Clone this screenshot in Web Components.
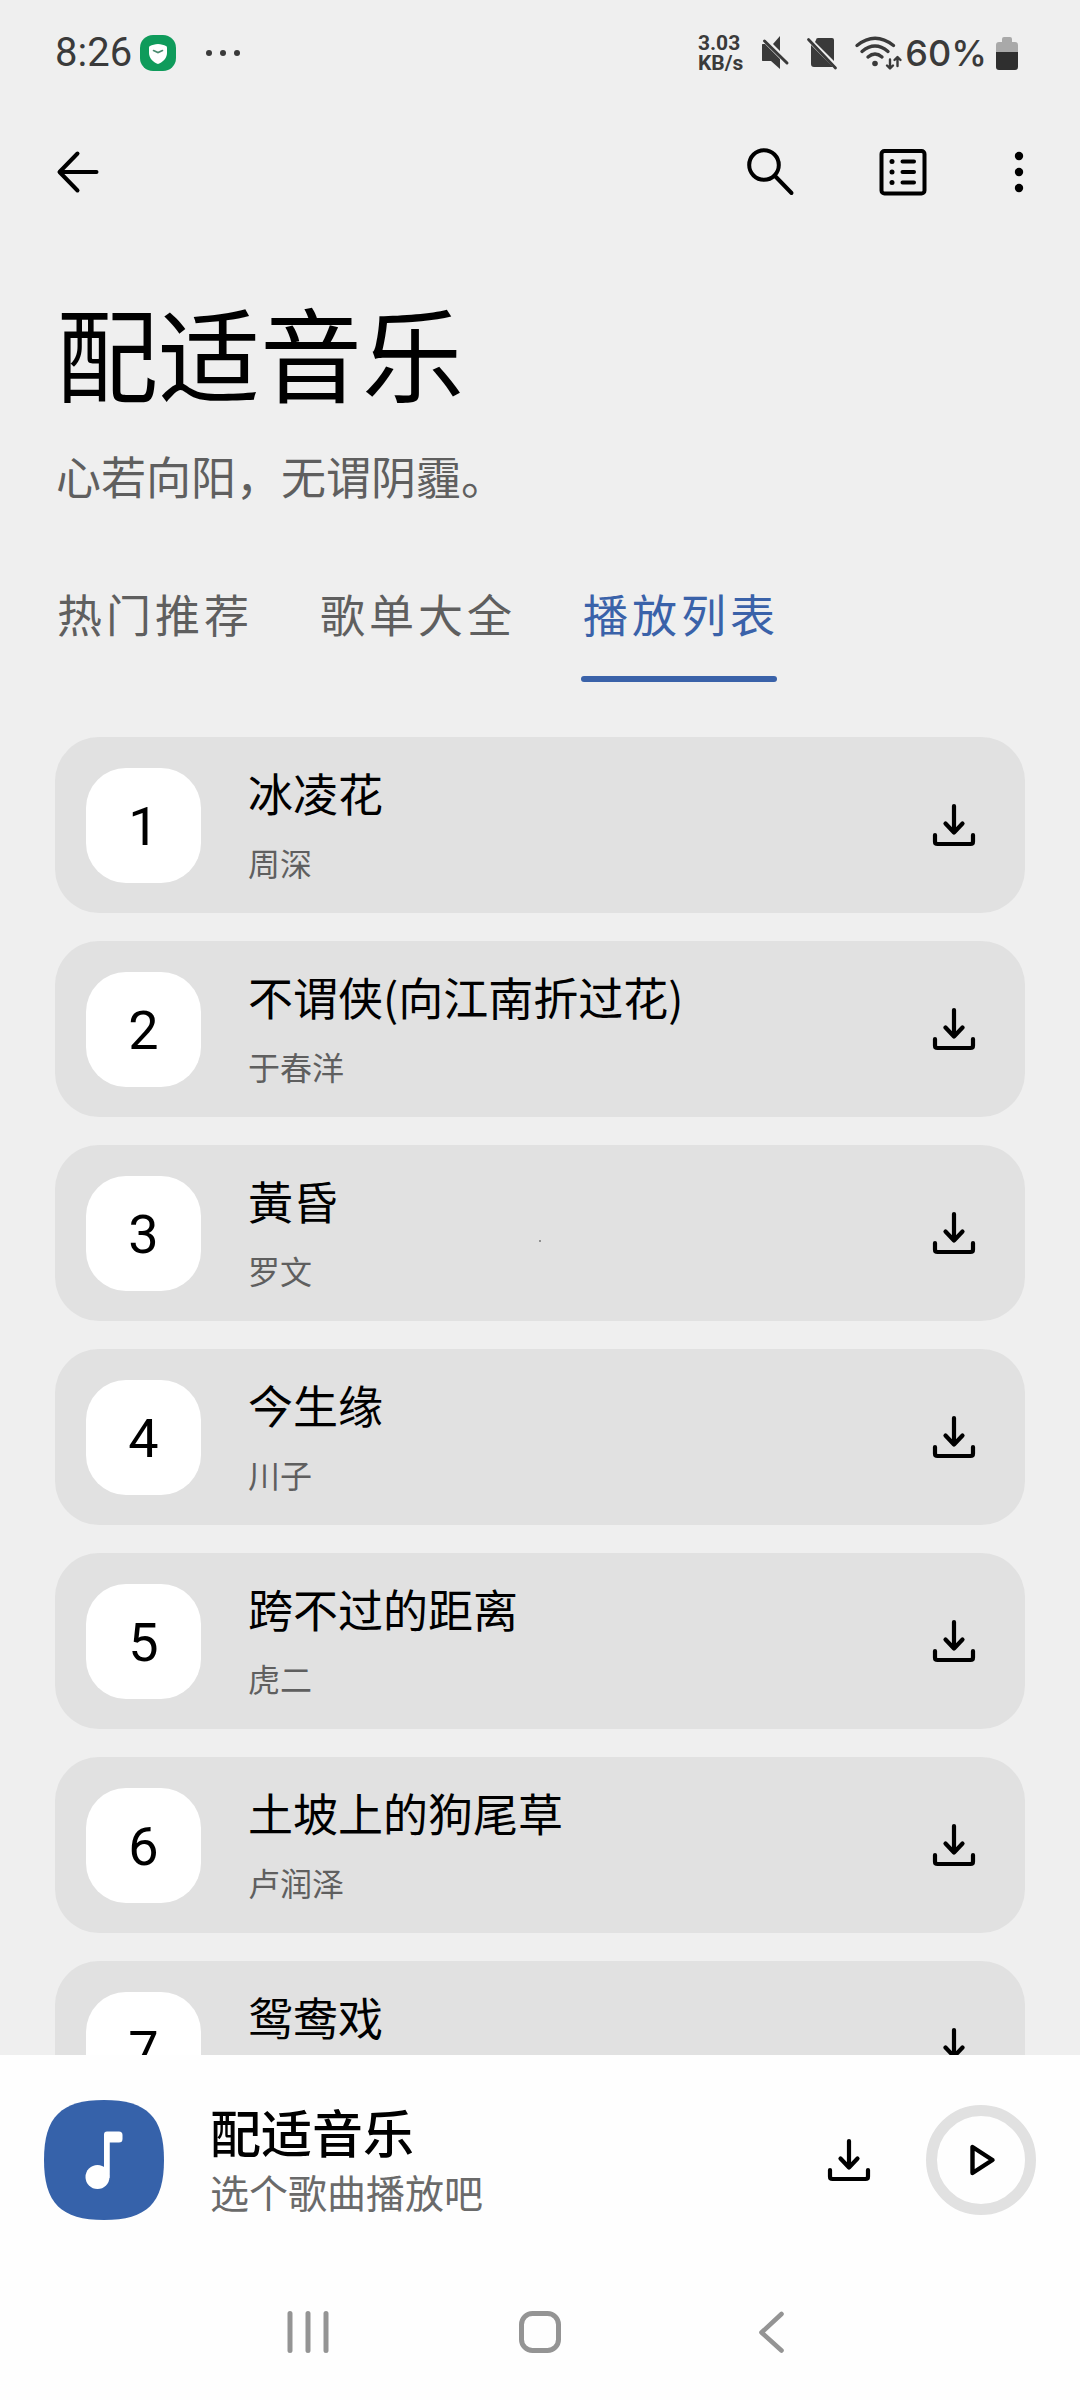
<!DOCTYPE html>
<html lang="zh-CN">
<head>
<meta charset="utf-8">
<meta name="viewport" content="width=device-width, initial-scale=1">
<title>配适音乐</title>
<style>
  :root {
    --page: #efefef; --card: #e1e1e1; --muted: #5f5f5f; --accent: #3a62a9; --system: #3a3a3a;
    --edge: 55px;
  }
  html, body { height: 100%; }
  body {
    margin: 0; background: var(--page); color: #000; overflow: hidden;
    font-family: "Noto Sans CJK SC", "Noto Sans", sans-serif;
  }
</style>
</head>
<body>
<music-app>
  <status-bar slot="top" time="8:26" battery="60%"></status-bar>
  <tool-bar slot="top"></tool-bar>
  <page-heading slot="top">配适音乐<span slot="motto">心若向阳，无谓阴霾。</span></page-heading>
  <tab-strip slot="top">
    <tab-item>热门推荐</tab-item>
    <tab-item>歌单大全</tab-item>
    <tab-item selected>播放列表</tab-item>
  </tab-strip>
  <song-list>
    <song-card number="1">冰凌花<span slot="artist">周深</span></song-card>
    <song-card number="2">不谓侠(向江南折过花)<span slot="artist">于春洋</span></song-card>
    <song-card number="3">黃昏<span slot="artist">罗文</span></song-card>
    <song-card number="4">今生缘<span slot="artist">川子</span></song-card>
    <song-card number="5">跨不过的距离<span slot="artist">虎二</span></song-card>
    <song-card number="6">土坡上的狗尾草<span slot="artist">卢润泽</span></song-card>
    <song-card number="7">鸳鸯戏</song-card>
  </song-list>
  <mini-player slot="bottom">配适音乐<span slot="hint">选个歌曲播放吧</span></mini-player>
  <nav-bar slot="bottom"></nav-bar>
</music-app>

<script>
const line = 'fill="none" stroke="currentColor" stroke-linecap="round" stroke-linejoin="round"';
const ICONS = {
  shield: [36, 36, `<rect width="36" height="36" rx="13" fill="#0f9b5b"/><path d="M18 9c3 0 6 1 8 2 .7.300 1 1 1 2v5c0 5-4 9-9 11-5-2-9-6-9-11v-5c0-1 .3-1.700 1-2 2-1 5-2 8-2z" fill="#fff"/><path d="M13.500 15.500l4.500 2 4.500-2" fill="none" stroke="#4a8a6e" stroke-width="1.600" stroke-linecap="round"/>`],
  dots: [34, 6, `<g fill="currentColor"><circle cx="3" cy="3" r="3"/><circle cx="17" cy="3" r="3"/><circle cx="31" cy="3" r="3"/></g>`],
  mute: [28, 34, `<path d="M1.500 8H4L19 23v10L10 25H1.500Q1 25 1 24V9Q1 8 1.500 8zM12 8l7-8v15z" fill="currentColor"/><path d="M3.500 5L26 27" ${line} stroke-width="3"/>`],
  sim: [30, 33, `<path d="M9 3q0-2 2-2h14q2 0 2 2v21L8 5zM4 8l22 22H7q-3 0-3-3z" fill="currentColor"/><path d="M1.500 2.500L28.500 31" ${line} stroke-width="2.800"/>`],
  wifi: [48, 34, `<g ${line} stroke-width="3.400"><path d="M2 9.500Q20-5 38.500 9.500M7 15.500Q20 4.500 33 15.500M13 21Q20 15 27 21"/></g><circle cx="20" cy="27.500" r="2.800" fill="currentColor"/><g ${line} stroke-width="2.400"><path d="M35 23.500v8.500M32 29.500l3 3 3-3M42.500 30v-8.500M39.500 24l3-3 3 3"/></g>`],
  battery: [22, 33, `<path d="M6 2q0-2 2-2h6q2 0 2 2v3h3q3 0 3 3v7H0V8q0-3 3-3h3z" fill="#a9a9a9"/><path d="M0 15h22v15q0 3-3 3H3q-3 0-3-3z" fill="#2f2f2f"/>`],
  back: [42, 42, `<path d="M20.500 2.500L2.500 21l18 18.500M3.500 21H39.500" ${line} stroke-width="4"/>`],
  search: [48, 48, `<g ${line} stroke-width="4"><circle cx="19" cy="17" r="14.800"/><path d="M30.500 28.500L46.500 45"/></g>`],
  list: [48, 48, `<rect x="2.500" y="3" width="43" height="42.500" rx="3" ${line} stroke-width="4"/><g ${line} stroke-width="4"><path d="M23.500 13.500h11.500M23.500 24h11.500M23.500 34.500h11.500"/></g><g fill="currentColor"><circle cx="13" cy="13.500" r="2.500"/><circle cx="13" cy="24" r="2.500"/><circle cx="13" cy="34.500" r="2.500"/></g>`],
  more: [12, 42, `<g fill="currentColor"><circle cx="6" cy="5" r="4.200"/><circle cx="6" cy="21" r="4.200"/><circle cx="6" cy="37" r="4.200"/></g>`],
  download: [42, 42, `<path d="M21 2v26M12.500 19.500L21 28.500l8.500-9M2 31v6.500q0 2.500 2.500 2.500h33q2.500 0 2.500-2.500V31" ${line} stroke-width="4.200"/>`],
  play: [26, 32, `<path d="M4.500 3v26L24.500 16z" ${line} stroke-width="4.400"/>`],
  note: [120, 120, `<path d="M60 0c43 0 60 17 60 60s-17 60-60 60S0 103 0 60 17 0 60 0z" fill="#3662aa"/><path d="M60 34.500q0-3 3-3h12q3.500 0 3.500 3.500v4q0 3.500-3.500 3.500H65.500V77z" fill="#fff"/><path d="M60 34v44h5.500V38z" fill="#fff"/><circle cx="53.500" cy="77" r="12" fill="#fff"/>`],
  recents: [42, 42, `<path d="M3 2.500v37M21 2.500v37M39 2.500v37" ${line} stroke-width="5"/>`],
  home: [42, 42, `<rect x="2.500" y="2.500" width="37" height="37" rx="11" ${line} stroke-width="5"/>`],
  previous: [42, 42, `<path d="M30.500 3L10.500 21.500l20 18" ${line} stroke-width="4.600"/>`],
};

function define(name, css, render) {
  customElements.define(name, class extends HTMLElement {
    connectedCallback() {
      if (this.shadowRoot) return;
      const root = this.attachShadow({ mode: 'open' });
      const template = document.createElement('template');
      template.innerHTML = `<style>
        *{box-sizing:border-box}
        button{display:flex;align-items:center;justify-content:center;padding:0;border:0;background:none;color:inherit;font:inherit;cursor:pointer}
        ${css}</style>${render(this)}`;
      root.append(template.content.cloneNode(true));
    }
  });
}

define('ui-icon', `:host{display:block;flex:none} svg{display:block;overflow:visible}`, el => {
  const [w, h, body] = ICONS[el.getAttribute('name')];
  return `<svg width="${w}" height="${h}" viewBox="0 0 ${w} ${h}" aria-hidden="true">${body}</svg>`;
});

define('music-app', `
  :host{display:flex;flex-direction:column;height:100vh;position:relative}
  main{flex:1;min-height:0;overflow:hidden}
  header,footer{flex:none}
  footer{background:#fefefe}
  i{position:absolute;left:50%;top:1240px;width:2px;height:2px;margin-left:-1px;border-radius:1px;background:#777}`,
  () => `<header><slot name="top"></slot></header><main><slot></slot></main><footer><slot name="bottom"></slot></footer><i></i>`);

define('status-bar', `
  :host{display:flex;box-sizing:border-box;align-items:center;justify-content:space-between;height:104px;padding:2px 62px 0 var(--edge);color:var(--system)}
  div{display:flex;align-items:center}
  .left{gap:8px}
  .left ui-icon + ui-icon{margin-left:22px}
  .time{font:400 40px/48px Roboto,sans-serif}
  .right{gap:9px}
  .icons{gap:18px}
  .power{gap:2px}
  .speed{flex-direction:column;align-items:flex-start;font:700 21px/20px Roboto,sans-serif}
  .level{font:500 36px/48px Inter,sans-serif}`,
  el => `<div class="left"><span class="time">${el.getAttribute('time')}</span><ui-icon name="shield"></ui-icon><ui-icon name="dots"></ui-icon></div>
    <div class="right"><div class="icons"><div class="speed"><span>3.03</span><span>KB/s</span></div><ui-icon name="mute"></ui-icon><ui-icon name="sim"></ui-icon>
    <div class="power"><ui-icon name="wifi"></ui-icon><span class="level">${el.getAttribute('battery')}</span></div></div><ui-icon name="battery"></ui-icon></div>`);

define('tool-bar', `
  :host{display:flex;align-items:center;justify-content:space-between;height:136px;padding:0 var(--edge) 0 57px}
  div{display:flex;align-items:center;gap:86px}`,
  () => `<button aria-label="返回"><ui-icon name="back"></ui-icon></button>
    <div><button aria-label="搜索"><ui-icon name="search"></ui-icon></button>
    <button aria-label="列表"><ui-icon name="list"></ui-icon></button>
    <button aria-label="更多"><ui-icon name="more"></ui-icon></button></div>`);

define('page-heading', `
  :host{display:block;padding:51px 56px 77px}
  h1{margin:0 0 35px;font-size:102px;line-height:120px;font-weight:400}
  p{margin:0;font-size:45px;line-height:60px;color:var(--muted)}`,
  () => `<h1><slot></slot></h1><p><slot name="motto"></slot></p>`);

define('tab-strip', `
  :host{display:block;padding:0 var(--edge) 55px}
  div{display:flex;gap:65px}`,
  () => `<div role="tablist"><slot></slot></div>`);

define('tab-item', `
  :host{display:block;color:var(--muted)}
  :host([selected]){color:var(--accent)}
  button{display:block;padding:1px 0 0 2px;font-size:45px;line-height:60px;letter-spacing:4px;white-space:nowrap}
  button::after{content:"";display:block;height:6px;margin:32px 2px 0 -2px;border-radius:3px}
  :host([selected]) button::after{background:var(--accent)}`,
  el => `<button role="tab" aria-selected="${el.hasAttribute('selected')}"><slot></slot></button>`);

define('song-list', `
  :host{display:block;padding:0 var(--edge)}
  div{display:flex;flex-direction:column;gap:28px}`,
  () => `<div role="list"><slot></slot></div>`);

define('song-card', `
  :host{display:flex;align-items:center;height:176px;padding:0 50px 0 31px;border-radius:44px;background:var(--card)}
  .number{display:flex;align-items:center;justify-content:center;flex:none;width:115px;height:115px;padding-top:3px;border-radius:40px;background:#fff;font:400 54px/60px Roboto,sans-serif}
  .text{flex:1;min-width:0;display:flex;flex-direction:column;gap:15px;padding:0 0 2px 47px}
  .title{font-size:45px;line-height:60px;white-space:nowrap}
  .artist{min-height:48px;font-size:32px;line-height:48px;color:var(--muted)}`,
  el => `<span class="number">${el.getAttribute('number')}</span>
    <div class="text"><div class="title"><slot></slot></div><div class="artist"><slot name="artist"></slot></div></div>
    <button aria-label="下载"><ui-icon name="download"></ui-icon></button>`);

define('mini-player', `
  :host{display:flex;align-items:center;height:210px;padding:0 44px}
  .text{flex:1;min-width:0;display:flex;flex-direction:column;gap:4px;padding:0 0 2px 46px}
  .title{font-size:51px;line-height:60px;font-weight:500}
  .hint{font-size:39px;line-height:52px;color:#6a6a6a}
  .play{width:110px;height:110px;margin-left:56px;border:11px solid var(--card);border-radius:50%}`,
  () => `<ui-icon name="note"></ui-icon>
    <div class="text"><div class="title"><slot></slot></div><div class="hint"><slot name="hint"></slot></div></div>
    <button aria-label="下载"><ui-icon name="download"></ui-icon></button>
    <button class="play" aria-label="播放"><ui-icon name="play"></ui-icon></button>`);

define('nav-bar', `
  :host{display:flex;justify-content:center;height:135px;padding-bottom:2px;box-sizing:border-box;color:#949494}
  button{width:232px}`,
  () => `<button aria-label="最近"><ui-icon name="recents"></ui-icon></button>
    <button aria-label="主页"><ui-icon name="home"></ui-icon></button>
    <button aria-label="后退"><ui-icon name="previous"></ui-icon></button>`);
</script>
</body>
</html>
